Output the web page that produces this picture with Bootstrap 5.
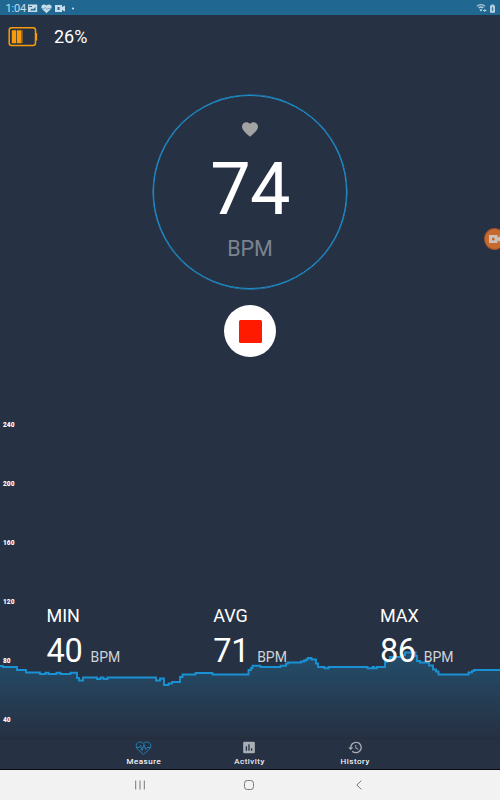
<!DOCTYPE html>
<html lang="en">
<head>
<meta charset="utf-8">
<meta name="viewport" content="width=device-width, initial-scale=1">
<title>Heart rate</title>
<link href="https://cdn.jsdelivr.net/npm/bootstrap@5.3.0/dist/css/bootstrap.min.css" rel="stylesheet">
<style>
body{background:#263143;font-family:Roboto,"Noto Sans",sans-serif;line-height:1}
svg{display:block;flex:none}
.app{height:800px}
.statusbar{height:15px;background:#206892;color:#c6dce8;font-size:11px;padding:1px 4px 0 5.5px;letter-spacing:-.2px}
.status-icons{margin-left:2px}
.battery-row{height:43px;padding-left:8px;font-size:18px}
.gauge{width:194px;height:194px;border:1px solid #1d94d4;box-shadow:0 0 0 .5px #1d94d4;margin-top:36.5px;padding-top:26.5px}
.gauge-value{font-size:72px;line-height:74px;margin-top:15.5px;letter-spacing:-.6px}
.gauge-unit{font-size:21.5px;color:#7c8390;margin-top:11.5px}
.stop{width:52px;height:52px;margin-top:16.5px;padding:0}
.stop:before{content:"";display:block;width:23px;height:23px;background:#ff1a00;border-radius:1.5px}
.chart{height:316px;margin-top:auto}
.scale{height:303px;font-size:6.5px;font-weight:900;padding:1px 0 0 3px;letter-spacing:.1px}
.stats{bottom:70px;padding-left:46.5px}
.stat{width:166.7px}
.stat-name{font-size:18px;margin-bottom:10px}
.stat-value{font-size:32.5px;letter-spacing:-.3px}
.stat-unit{font-size:14px;color:#d0d4d9;margin-left:8px}
.tabs{height:33px;border-bottom:1px solid #080b10;font-size:8px;letter-spacing:.55px;padding:3px 92px 0 91px;background:linear-gradient(#252e3e,#263143 5px);-webkit-text-stroke:.1px #fff}
.tab-icon{height:18px;padding-top:1px}
.sysnav{height:30px;background:#f2f2f2;padding:0 86px 0 85px}
.recorder{right:-5px;top:228px;width:21px;height:22px;background:#c76a2d;border:1px solid #985331;padding-left:4px}
</style>
<script src="https://cdn.jsdelivr.net/npm/bootstrap@5.3.0/dist/js/bootstrap.bundle.min.js"></script>
</head>
<body class="m-0 overflow-hidden">
<div class="app d-flex flex-column position-relative overflow-hidden text-white">
  <header class="statusbar d-flex align-items-center">
    <span>1:04</span>
    <svg class="status-icons" width="48" height="11" viewBox="0 0 48 11" fill="#c6dce8">
      <path d="M0 1.500h9.200v7.500H0z"/><path d="M2 7.500l2-2 1 1 2.500-2.500v3.500zM1 3h3v1H1z" fill="#206892"/>
      <path d="M18.500 10.300L13.900 5.800C11.800 3.200 15.300-.5 18.500 2.600c3.200-3.100 6.700.6 4.600 3.200z"/><path d="M14 5.500h2.300l1-1.200 1.500 2.400 1-1.200h3" fill="none" stroke="#206892" stroke-width=".4"/>
      <path d="M27 2h7v2l3-1.500v6L34 7v2h-7z"/><path d="M29.500 4h2v3h-2z" fill="#206892"/>
      <circle cx="45" cy="5.500" r="1.100"/>
    </svg>
    <svg class="ms-auto" width="20" height="11" viewBox="0 0 20 11" fill="none" stroke="#b5cfdf">
      <path d="M1 3.300Q5 0 9 3.300M2.700 5q2.300-2 4.600 0M4 6.500l1 1 1-1" stroke-width="1.300"/><path d="M7 7.500h3.500M8.800 6v3" stroke-width=".9"/>
      <path d="M14.500 2.800h4v6.500h-4zM15.500 1.800h2" fill="#b5cfdf" stroke-width="1"/><path d="M16.500 4v4M15.500 6h2" stroke="#206892" stroke-width=".7"/>
    </svg>
  </header>

  <div class="battery-row d-flex align-items-center">
    <svg width="30" height="20" viewBox="0 0 30 20" fill="none" stroke="#f79b0b">
      <rect x="1.200" y=".8" width="26.300" height="17.800" rx="2.500" stroke-width="1.500"/>
      <path d="M28.500 6v7.500" stroke-width="1.300"/><path d="M3.800 3.200h4.300v13H3.800zM8.800 3.200h4.700v13H8.800z" fill="#f79b0b" stroke="none"/><path d="M14.300 3.200v13" stroke-width=".5"/>
    </svg>
    <span class="ms-3">26%</span>
  </div>

  <main class="d-flex flex-column align-items-center flex-grow-1">
    <section class="gauge rounded-circle d-flex flex-column align-items-center">
      <svg width="16" height="15" viewBox="2 3 20 18.400" fill="#a3a3a3"><path d="M12 21.350l-1.450-1.320C5.400 15.360 2 12.280 2 8.500 2 5.420 4.420 3 7.500 3c1.740 0 3.410.81 4.500 2.090C13.090 3.810 14.760 3 16.500 3 19.580 3 22 5.420 22 8.500c0 3.780-3.400 6.860-8.550 11.540z"/></svg>
      <div class="gauge-value">74</div>
      <div class="gauge-unit">BPM</div>
    </section>
    <button class="stop btn btn-light bg-white border-0 rounded-circle d-flex align-items-center justify-content-center" aria-label="Stop"></button>

    <section class="chart w-100 position-relative">
      <svg class="position-absolute bottom-0 start-0" width="500" height="90" viewBox="0 647 500 90">
        <defs><linearGradient id="fade" gradientUnits="userSpaceOnUse" x1="0" y1="660" x2="0" y2="735"><stop stop-color="#244b67"/><stop offset="1" stop-color="#263143"/></linearGradient></defs>
        <path fill="url(#fade)" d="M0 737V666H3V667H17V670H26V672.500H40V674H45.500V672.700H48.500V674H56.500V672.700H60.500V674H70.500V672.700H77V678H79V680.500H83V677.500H97V679H100.500V677.500H103.500V679H107.500V677.500H156V680.500H160V678.500H164V685H168.500V683.500H172V682H180V677H182.500V674.500H195.500V673H212.500V674.500H248.500V670H251V668H252.500V665.700H260.500V667H280.500V665.700H286V663.500H288V662.500H301V661.500H304V660.500H306V659.500H308V658H311.500V659.500H316V663.500H318V667H324.500V668.200H328.500V667H367.500V668.200H372.500V667H374V668.200H377V667H385V662H387V660H390V657H403V655H405V652.500H415.500V656H417V661H420V662.500H429V665.500H433V669.500H436V671.500H438.500V674.500H468.500V672.500H472V671H474V670H500V737z"/>
        <path fill="none" stroke="#1991d2" stroke-width="1.900" d="M0 666H3V667H17V670H26V672.500H40V674H45.500V672.700H48.500V674H56.500V672.700H60.500V674H70.500V672.700H77V678H79V680.500H83V677.500H97V679H100.500V677.500H103.500V679H107.500V677.500H156V680.500H160V678.500H164V685H168.500V683.500H172V682H180V677H182.500V674.500H195.500V673H212.500V674.500H248.500V670H251V668H252.500V665.700H260.500V667H280.500V665.700H286V663.500H288V662.500H301V661.500H304V660.500H306V659.500H308V658H311.500V659.500H316V663.500H318V667H324.500V668.200H328.500V667H367.500V668.200H372.500V667H374V668.200H377V667H385V662H387V660H390V657H403V655H405V652.500H415.500V656H417V661H420V662.500H429V665.500H433V669.500H436V671.500H438.500V674.500H468.500V672.500H472V671H474V670H500"/>
      </svg>
      <div class="scale position-relative d-flex flex-column justify-content-between">
        <span>240</span><span>200</span><span>160</span><span>120</span><span>80</span><span>40</span>
      </div>
      <div class="stats position-absolute start-0 d-flex">
        <div class="stat"><div class="stat-name">MIN</div><div class="d-flex align-items-baseline"><span class="stat-value">40</span><span class="stat-unit">BPM</span></div></div>
        <div class="stat"><div class="stat-name">AVG</div><div class="d-flex align-items-baseline"><span class="stat-value">71</span><span class="stat-unit">BPM</span></div></div>
        <div class="stat"><div class="stat-name">MAX</div><div class="d-flex align-items-baseline"><span class="stat-value">86</span><span class="stat-unit">BPM</span></div></div>
      </div>
    </section>
  </main>

  <nav class="tabs d-flex text-center">
    <div class="col-4 d-flex flex-column align-items-center"><div class="tab-icon">
      <svg width="17" height="15" viewBox="0 0 17 15" fill="none" stroke="#2387bc" stroke-width=".9"><path d="M8.500 13.500L2 7.500C-1 3 4.500-1.500 8.500 2.500c4-4 9.500.5 6.500 5z"/><path d="M1.500 6.500H4l1.500-2 1.500 5 2-6 1.500 5 1.500-2h3.500"/></svg></div>Measure</div>
    <div class="col-4 d-flex flex-column align-items-center"><div class="tab-icon">
      <svg width="12" height="13" viewBox="3 2 18 20" fill="#a9adb4"><path d="M5 3h14a2 2 0 0 1 2 2v14a2 2 0 0 1-2 2H5a2 2 0 0 1-2-2V5c0-1.100.9-2 2-2zm2 7v7h2v-7zm4-3v10h2V7zm4 6v4h2v-4z" fill-rule="evenodd"/></svg></div>Activity</div>
    <div class="col-4 d-flex flex-column align-items-center"><div class="tab-icon">
      <svg width="14" height="13" viewBox="1 2 21 20" fill="#a9adb4"><path d="M13 3a9 9 0 0 0-9 9H1l3.890 3.890.07.14L9 12H6a7 7 0 1 1 2.060 4.940l-1.420 1.420A9 9 0 1 0 13 3zm-1 5v5l4.280 2.540.72-1.210-3.500-2.080V8z"/></svg></div>History</div>
  </nav>

  <footer class="sysnav d-flex align-items-center">
    <div class="col-4 d-flex justify-content-center"><svg width="10" height="10" viewBox="0 0 10 10" stroke="#777" stroke-width="1"><path d="M.7.500v9M5 .5v9M9.300.500v9"/></svg></div>
    <div class="col-4 d-flex justify-content-center"><svg width="10" height="10" viewBox="0 0 10 10" fill="none" stroke="#777"><rect x=".5" y=".5" width="9" height="9" rx="2.800"/></svg></div>
    <div class="col-4 d-flex justify-content-center"><svg width="6" height="10" viewBox="0 0 6 10" fill="none" stroke="#777"><path d="M5.300.700L.8 5l4.500 4.300"/></svg></div>
  </footer>

  <div class="recorder position-absolute rounded-circle d-flex align-items-center">
    <svg width="12" height="8" viewBox="0 0 12 8" fill="#c9c1ba"><path d="M0 0h8.500v2.500L12 1v6L8.500 5.500V8H0z"/><circle cx="4.300" cy="4" r="1.500" fill="#c76a2d"/></svg>
  </div>
</div>
</body>
</html>
